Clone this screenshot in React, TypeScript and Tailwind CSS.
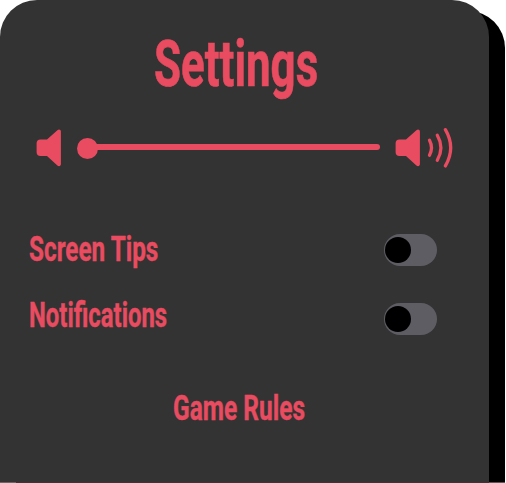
import React from "react";

const pink = "text-[#e94b60]";

function Speaker({ waves = false }: { waves?: boolean }) {
  return (
    <svg width={waves ? 60 : 26} height="42" viewBox={waves ? "0 0 60 42" : "0 0 26 42"} fill="none" className={"block shrink-0 " + pink}>
      <path
        d="M4.5 12.500H11L21.400 3.200C22.800 2 24.900 2.500 24.900 4.600V37.100C24.900 39.300 22.800 39.700 21.400 38.500L11 29.100H4.500Q.6 29.100 .6 25.100V16.500Q.6 12.500 4.500 12.500Z"
        fill="currentColor"
      />
      {waves && (
        <g stroke="currentColor" strokeWidth="3.3" strokeLinecap="round">
          <path d="M34.500 13.300Q38.500 20.800 34.500 28.300" />
          <path d="M42.300 8.300Q49.500 20.800 42.300 33.300" />
          <path d="M50.400 2.700Q61 20.800 50.400 38.900" />
        </g>
      )}
    </svg>
  );
}

function Toggle() {
  return (
    <button aria-label="Toggle" className="flex h-8 w-[52.500px] items-center rounded-full bg-[#5e5d63] pl-px">
      <span className="h-[26px] w-[26px] rounded-full bg-black" />
    </button>
  );
}

export default function App() {
  return (
    <div className="h-[483px] w-[506px] overflow-hidden bg-white">
      <main className={"flex h-[482px] w-[489px] flex-col rounded-t-[37px] bg-[#333333] font-['Roboto',sans-serif] font-bold shadow-[16px_11px_0_#000] " + pink}>
        <h1 className="ml-[154px] mt-8 h-[64px] w-[170px] origin-left scale-x-[0.675] whitespace-nowrap text-[65px] leading-[64px] [-webkit-text-stroke:0.7px_#e94b60]">
          Settings
        </h1>
        <div className="ml-9 mt-[31px] flex h-[42px] items-center">
          <Speaker />
          <div className="ml-[15px] mr-[15px] flex w-[303px] items-center">
            <span className="h-[21px] w-[21px] shrink-0 rounded-full bg-[#e94b60]" />
            <span className="-ml-1 -mt-[2px] h-[6px] grow rounded-r-full bg-[#e94b60]" />
          </div>
          <Speaker waves />
        </div>
        <div className="ml-[29px] mr-[52.500px] mt-[61px] flex h-10 items-center justify-between">
          <span className="-mt-[2px] w-[140px] origin-left scale-x-[0.685] whitespace-nowrap text-[35.500px] leading-10 [-webkit-text-stroke:0.4px_#e94b60]">Screen Tips</span>
          <Toggle />
        </div>
        <div className="ml-[29px] mr-[52.500px] mt-[29px] flex h-10 items-center justify-between">
          <span className="-mt-2 w-[140px] origin-left scale-x-[0.673] whitespace-nowrap text-[35.500px] leading-[34px] [-webkit-text-stroke:0.4px_#e94b60]">Notifications</span>
          <Toggle />
        </div>
        <button className="ml-[173px] mt-[49px] h-10 w-[140px] origin-left scale-x-[0.690] whitespace-nowrap text-left text-[35.500px] leading-10 [-webkit-text-stroke:0.4px_#e94b60]">
          Game Rules
        </button>
      </main>
      <div className="flex h-px">
        <span className="w-4 bg-[#676767]" />
        <span className="w-[473px] bg-[#3c3437]" />
        <span className="w-4 bg-[#5a5657]" />
      </div>
    </div>
  );
}
